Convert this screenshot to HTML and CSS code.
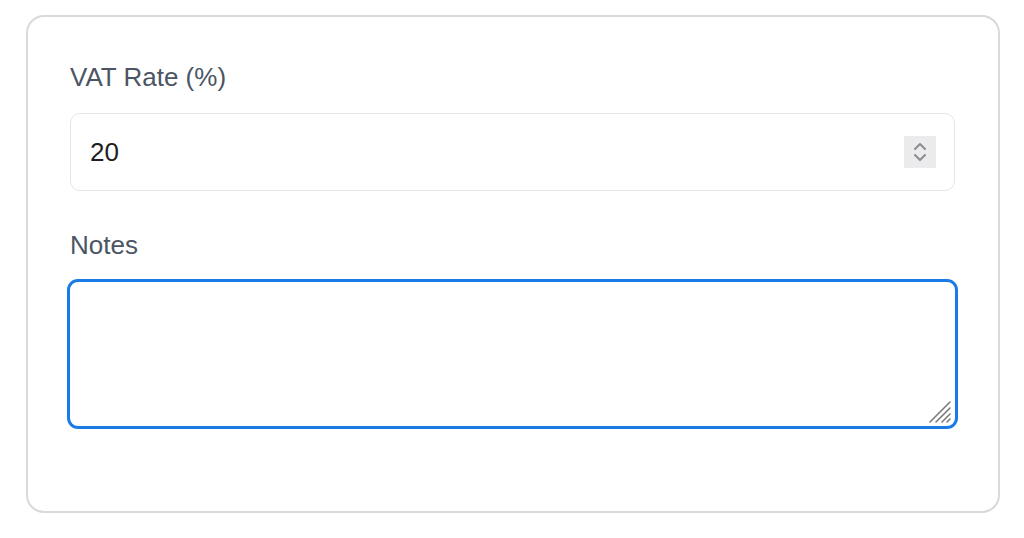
FILE: index.html
```html
<!DOCTYPE html>
<html lang="en">
<head>
<meta charset="UTF-8">
<meta name="viewport" content="width=device-width, initial-scale=1.0">
<title>Invoice settings</title>
<link rel="stylesheet" href="styles.css">
</head>
<body>
<div class="card">
  <div class="field">
    <label class="label" for="vat">VAT Rate (%)</label>
    <div class="number-box">
      <input class="number-input" id="vat" type="number" value="20">
      <span class="spinner">
        <svg width="32" height="32" viewBox="0 0 32 32">
          <path d="M11 13 L16 8 L21 13" fill="none" stroke="#8c8c90" stroke-width="2" stroke-linecap="round" stroke-linejoin="round"/>
          <path d="M11 19 L16 24 L21 19" fill="none" stroke="#8c8c90" stroke-width="2" stroke-linecap="round" stroke-linejoin="round"/>
        </svg>
      </span>
    </div>
  </div>
  <div class="field">
    <label class="label" for="notes">Notes</label>
    <div class="notes-wrap">
      <textarea class="notes" id="notes"></textarea>
      <svg class="grip" width="24" height="24" viewBox="0 0 24 24">
        <path d="M2 22 L22 2 M8 22 L22 8 M14 22 L22 14 M19 22 L22 19" stroke="#7a7a7a" stroke-width="1.6" stroke-linecap="round"/>
      </svg>
    </div>
  </div>
</div>
</body>
</html>
```

FILE: styles.css
```css
body {
  margin: 0;
  font-family: "Liberation Sans", Arial, sans-serif;
  background: #fff;
}
.card {
  margin: 15px 24px 0 26px;
  padding: 42px 43px 46px 42px;
  border: 2px solid #d9d9d9;
  border-radius: 18px;
  background: #fff;
}
.field {
  margin-bottom: 36px;
}
.label {
  display: block;
  font-size: 26px;
  line-height: 36px;
  color: #4b5563;
  margin-bottom: 18px;
}
.number-box {
  display: flex;
  align-items: center;
  height: 78px;
  box-sizing: border-box;
  border: 1px solid #e3e5e8;
  border-radius: 10px;
  padding: 0 18px 0 19px;
}
.number-input {
  flex: 1;
  border: none;
  outline: none;
  padding: 0;
  font-family: inherit;
  font-size: 26px;
  color: #1f1f1f;
  background: transparent;
  -moz-appearance: textfield;
}
.number-input::-webkit-inner-spin-button,
.number-input::-webkit-outer-spin-button {
  -webkit-appearance: none;
  margin: 0;
}
.spinner {
  display: flex;
  width: 32px;
  height: 32px;
  background: #ebebed;
}
.notes-wrap {
  position: relative;
  margin: -2px -3px 0 -3px;
}
.notes {
  display: block;
  width: 100%;
  height: 150px;
  box-sizing: border-box;
  border: 3px solid #1a7ae6;
  border-radius: 11px;
  outline: none;
  resize: none;
  padding: 10px 16px;
  font-family: inherit;
  font-size: 26px;
}
.grip {
  position: absolute;
  right: 6px;
  bottom: 5px;
}
```
